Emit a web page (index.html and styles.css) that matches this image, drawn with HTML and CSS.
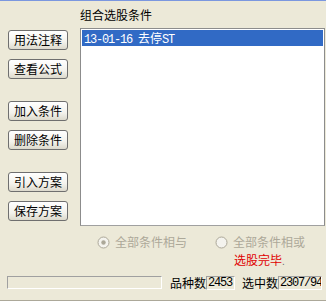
FILE: index.html
```html
<!DOCTYPE html>
<html>
<head>
<meta charset="utf-8">
<link rel="stylesheet" href="styles.css">
</head>
<body>
<div class="app">
  <div class="topbar"></div>
  <div class="main">
    <div class="buttons">
      <div class="group">
        <div class="btn">用法注释</div>
        <div class="btn">查看公式</div>
      </div>
      <div class="group">
        <div class="btn">加入条件</div>
        <div class="btn">删除条件</div>
      </div>
      <div class="group">
        <div class="btn">引入方案</div>
        <div class="btn">保存方案</div>
      </div>
    </div>
    <div class="right">
      <div class="title">组合选股条件</div>
      <div class="listbox">
        <div class="item selected"><span class="mono">13-01-16 </span>去停<span class="mono">ST</span></div>
      </div>
    </div>
  </div>
  <div class="options">
    <div class="opt">
      <svg class="radio" width="13" height="13" viewBox="0 0 13 13">
        <circle cx="6.5" cy="6.5" r="5.5" fill="#f4f3ee" stroke="#aca899" stroke-width="1"/>
        <circle cx="6.5" cy="6.5" r="2.2" fill="#aca899"/>
      </svg>
      <span class="optlabel">全部条件相与</span>
    </div>
    <div class="opt">
      <svg class="radio" width="13" height="13" viewBox="0 0 13 13">
        <circle cx="6.5" cy="6.5" r="5.5" fill="#f4f3ee" stroke="#aca899" stroke-width="1"/>
      </svg>
      <span class="optlabel">全部条件相或</span>
    </div>
  </div>
  <div class="status"><span class="done">选股完毕</span><span class="dot">.</span></div>
  <div class="statusbar">
    <div class="progress"></div>
    <span class="label first">品种数</span>
    <span class="numbox w29">2453</span>
    <span class="label second">选中数</span>
    <span class="numbox w44">2307/94</span>
  </div>
  <div class="separator"></div>
</div>
</body>
</html>
```

FILE: styles.css
```css
html, body {
  margin: 0;
  padding: 0;
}
body {
  background: #ece9d8;
  font-family: "Noto Sans CJK SC", "Noto Sans", sans-serif;
  font-size: 12px;
  color: #000;
  width: 326px;
  height: 302px;
  overflow: hidden;
}
.app {
  display: flex;
  flex-direction: column;
  height: 302px;
}
.topbar {
  height: 2px;
  background: #7b97df;
}
.main {
  display: flex;
  padding-left: 8px;
}
.buttons {
  width: 60px;
  margin-top: 29px;
  display: flex;
  flex-direction: column;
  gap: 22px;
}
.group {
  display: flex;
  flex-direction: column;
  gap: 9px;
}
.btn {
  box-sizing: border-box;
  height: 20px;
  width: 60px;
  border: 1px solid #6f6f6f;
  border-radius: 3px;
  background: linear-gradient(#ffffff, #f3f2ec 60%, #dcd9cc);
  display: flex;
  align-items: center;
  justify-content: center;
  line-height: 12px;
  font-size: 12px;
}
.right {
  margin-left: 12px;
  width: 245px;
  display: flex;
  flex-direction: column;
}
.title {
  padding-top: 7px;
  line-height: 14px;
  height: 14px;
  padding-bottom: 6px;
}
.listbox {
  box-sizing: border-box;
  height: 198px;
  background: #fff;
  border-top: 1px solid #8c8c8c;
  border-left: 1px solid #8c8c8c;
  border-right: 1px solid #8c8c8c;
  border-bottom: 1px solid #a0a0a0;
  padding: 1px 1px 0 1px;
}
.item {
  height: 16px;
  line-height: 16px;
  padding-left: 2px;
  font-size: 12px;
  white-space: nowrap;
}
.selected {
  background: #316ac5;
  color: #fff;
}
.mono {
  font-family: "Liberation Mono", monospace;
  font-size: 12px;
  letter-spacing: -1.2px;
}
.options {
  display: flex;
  align-items: center;
  margin-top: 8px;
  padding-left: 97px;
  gap: 28px;
  height: 16px;
}
.opt {
  display: flex;
  align-items: center;
  gap: 5px;
}
.radio {
  display: block;
}
.optlabel {
  color: #aca899;
  line-height: 16px;
}
.status {
  padding-left: 234px;
  height: 15px;
  line-height: 15px;
  margin-top: 2px;
}
.done {
  color: #e00000;
}
.dot {
  color: #6a6a6a;
  font-family: "Liberation Sans", sans-serif;
  font-size: 10px;
}
.statusbar {
  display: flex;
  align-items: center;
  margin-top: 9px;
  padding-left: 7px;
  height: 13px;
}
.progress {
  box-sizing: border-box;
  width: 155px;
  height: 13px;
  border-top: 1px solid #a0a0a0;
  border-left: 1px solid #a0a0a0;
  border-right: 1px solid #fff;
  border-bottom: 1px solid #fff;
}
.label {
  line-height: 13px;
  width: 36px;
}
.first {
  margin-left: 8px;
}
.second {
  margin-left: 7px;
}
.numbox {
  box-sizing: border-box;
  height: 14px;
  border-top: 1px solid #a0a0a0;
  border-left: 1px solid #a0a0a0;
  border-right: 1px solid #fff;
  border-bottom: 1px solid #fff;
  font-family: "Liberation Mono", monospace;
  font-size: 12px;
  letter-spacing: -1.2px;
  line-height: 12px;
  padding-left: 1px;
  white-space: nowrap;
  overflow: hidden;
}
.w29 { width: 29px; }
.w44 { width: 44px; }
.separator {
  margin-top: 11px;
  height: 0;
  border-top: 1px solid #aca899;
  border-bottom: 1px solid #fff;
}
```
